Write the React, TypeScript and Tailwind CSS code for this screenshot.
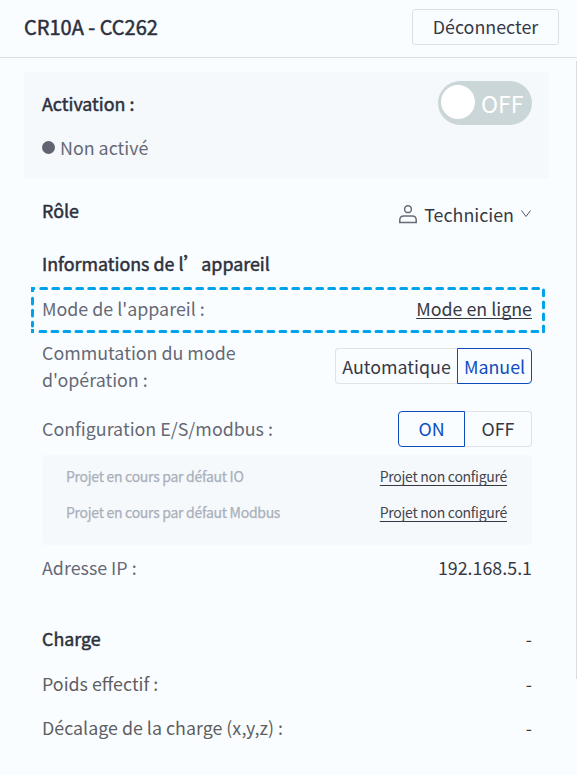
import React from "react";

const strong = "text-[#2c303c] [-webkit-text-stroke:0.5px_#2c303c]";

function Row({ label, children, className = "" }: { label: React.ReactNode; children?: React.ReactNode; className?: string }) {
  return (
    <div className={`flex items-center justify-between pr-[45px] pl-[42px] ${className}`}>
      <div>{label}</div>
      <div className="text-[#363945]">{children}</div>
    </div>
  );
}

function DashedOutline() {
  return (
    <svg className="pointer-events-none absolute top-0 left-[31px]" width="515" height="48" fill="none" stroke="#00a2e9" strokeWidth="3" strokeLinecap="round">
      <path d="M9.8 2.5H510" strokeDasharray="5.8 6.2" />
      <path d="M9 45.5H510" strokeDasharray="5.8 6.2" />
      <path d="M1.5 6V2.5H4" strokeLinecap="butt" />
      <path d="M1.5 12.2V40" strokeDasharray="5.8 6.2" />
      <path d="M1.5 43V45.5H3" strokeLinecap="butt" />
      <path d="M512.5 4V46" strokeDasharray="5.8 6.2" />
    </svg>
  );
}

export default function App() {
  return (
    <div className="relative h-[775px] w-[577px] overflow-hidden bg-[#fafdff] font-['Noto_Sans_CJK_SC',sans-serif] text-[17.85px] leading-[27px] whitespace-nowrap text-[#666975]">
      <header className="flex h-[58px] items-center justify-between border-b border-[#d9dfe4] pr-[18px] pb-[3px] pl-6">
        <h1 className={`pb-[2px] text-[20px] ${strong}`}>CR10A - CC262</h1>
        <button className="h-9 w-[147px] rounded-[3px] border border-[#dce0e6] pb-[2px] text-[#363945]">Déconnecter</button>
      </header>

      <section className="mt-[14px] ml-6 flex h-[107px] w-[525px] justify-between rounded-[4px] bg-[#f6f9fc] pt-[9px] pr-[17px] pl-[18px]">
        <div className="pt-[9px]">
          <div className={strong}>Activation :</div>
          <div className="mt-[17px] flex items-center gap-[5px]">
            <span className="size-[13px] rounded-full bg-[#626571]" />
            Non activé
          </div>
        </div>
        <div className="flex h-11 w-[94px] items-center rounded-full bg-[#cbd6d9] pl-[3px] text-[23px] text-white">
          <span className="mr-[6px] mb-[2px] size-[34px] rounded-full bg-white" />
          <span className="pt-[1px]">OFF</span>
        </div>
      </section>

      <Row className="h-[66px] pb-[3px]" label={<div className={strong}>Rôle</div>}>
        <div className="flex items-center pt-[7px]">
          <svg width="20" height="20" viewBox="0 0 20 20" fill="none" stroke="#676a75" strokeWidth="1.5" className="mr-[6px]">
            <circle cx="10" cy="5.2" r="3.4" />
            <path d="M1.8 18.4V16q0-4 4-4h8.4q4 0 4 4v2.4z" />
          </svg>
          Technicien
          <svg width="12" height="10" viewBox="0 0 12 10" fill="none" stroke="#555965" className="ml-[6px]">
            <path d="M1.5 1.5 6 7.5l4.5-6" />
          </svg>
        </div>
      </Row>

      <Row className="h-[41px] pb-[5px]" label={<div className={strong}>Informations de l’appareil</div>} />

      <div className="relative h-[48px]">
        <Row className="h-[46px] pb-[2px]" label="Mode de l'appareil :">
          <span className="underline decoration-1 underline-offset-2 [text-decoration-skip-ink:none]">Mode en ligne</span>
        </Row>
        <DashedOutline />
      </div>

      <Row className="h-[64px]" label={<>Commutation du mode<br />d'opération :</>}>
        <div className="flex h-9">
          <button className="w-[122px] rounded-l-[4px] border border-r-0 border-[#dfe3e8]">Automatique</button>
          <button className="w-[75px] rounded-r-[4px] border border-[#0d4cb8] text-[#0d4cc0]">Manuel</button>
        </div>
      </Row>

      <Row className="h-[61px]" label="Configuration E/S/modbus :">
        <div className="flex h-9">
          <button className="w-[67px] rounded-l-[4px] border border-[#0d4cb8] text-[#0d4cc0]">ON</button>
          <button className="w-[67px] rounded-r-[4px] border border-l-0 border-[#dfe3e8]">OFF</button>
        </div>
      </Row>

      <section className="-mt-1 ml-[42px] flex h-[90px] w-[490px] flex-col rounded-[4px] bg-[#f6f9fc] pt-[3px] pr-[25px] pl-6 text-[14px] leading-[18px] tracking-[-0.28px] text-[#a9b0bb]">
        <div className="flex h-9 items-center justify-between">
          <span className="[-webkit-text-stroke:0.25px_#a9b0bb]">Projet en cours par défaut IO</span>
          <span className="text-[#42454f] underline decoration-[#363945] decoration-1 underline-offset-3 [text-decoration-skip-ink:none]">Projet non configuré</span>
        </div>
        <div className="flex h-9 items-center justify-between">
          <span className="[-webkit-text-stroke:0.25px_#a9b0bb]">Projet en cours par défaut Modbus</span>
          <span className="text-[#42454f] underline decoration-[#363945] decoration-1 underline-offset-3 [text-decoration-skip-ink:none]">Projet non configuré</span>
        </div>
      </section>

      <Row className="h-[45px]" label="Adresse IP :">192.168.5.1</Row>
      <Row className="mt-[26px] h-[45px]" label={<div className={strong}>Charge</div>}>-</Row>
      <Row className="h-[45px] text-[#5f5f62]" label="Poids effectif :">-</Row>
      <Row className="h-[43px] text-[#5f5f62]" label="Décalage de la charge (x,y,z) :">-</Row>

      <div className="absolute top-[61px] right-0 h-[618px] w-[1px] bg-[#d9dbe0]" />
    </div>
  );
}
